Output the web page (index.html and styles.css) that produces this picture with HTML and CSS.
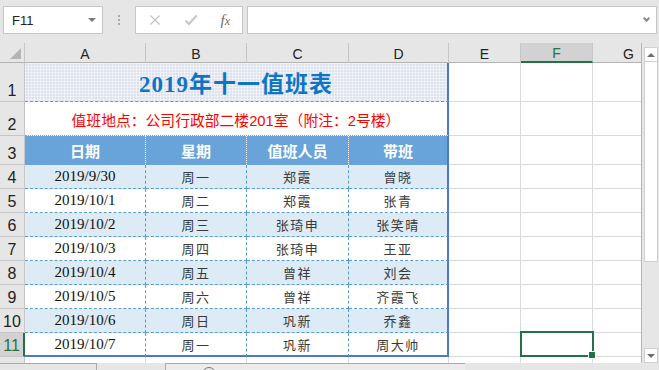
FILE: index.html
```html
<!DOCTYPE HTML>
<html>
<head>
  <title>2019年十一值班表</title>
  <link rel="stylesheet" href="styles.css">
</head>
<body>
  <!-- barra formule -->
  <div class="formula-bar">
    <div class="name-box"><span>F11</span><span class="caret"></span></div>
    <div class="grip"><span></span><span></span><span></span></div>
    <div class="fx-box">
      <svg class="icon" width="12" height="12" viewBox="0 0 12 12"><path d="M1.5 1.5 L10.5 10.5 M10.5 1.5 L1.5 10.5" stroke="#c4c4c4" stroke-width="1.3" fill="none"/></svg>
      <svg class="icon" width="14" height="12" viewBox="0 0 14 12"><path d="M1.5 6.5 L5 10 L12.5 1.5" stroke="#c4c4c4" stroke-width="2" fill="none"/></svg>
      <span class="fx">f<span class="fx-sub">x</span></span>
    </div>
    <div class="formula-input"><span class="chev"></span></div>
  </div>

  <div class="main">
    <div class="sheet">
      <div class="grid">
        <!-- intestazione colonne -->
        <div class="corner"><span class="tri"></span></div>
        <div class="ch">A</div>
        <div class="ch">B</div>
        <div class="ch">C</div>
        <div class="ch">D</div>
        <div class="ch">E</div>
        <div class="ch sel">F</div>
        <div class="ch">G</div>
        <div class="ch">H</div>

        <div class="rh">1</div>
        <div class="title">2019年十一值班表</div>
        <div class="c"></div><div class="c"></div><div class="c"></div><div class="c"></div>

        <div class="rh">2</div>
        <div class="note">值班地点：公司行政部二楼201室（附注：2号楼）</div>
        <div class="c"></div><div class="c"></div><div class="c"></div><div class="c"></div>

        <div class="rh">3</div>
        <div class="th">日期</div>
        <div class="th">星期</div>
        <div class="th">值班人员</div>
        <div class="th end">带班</div>
        <div class="c"></div><div class="c"></div><div class="c"></div><div class="c"></div>

        <div class="row alt">
          <div class="rh">4</div>
          <div class="td date">2019/9/30</div><div class="td">周一</div><div class="td">郑霞</div><div class="td end">曾晓</div>
          <div class="c"></div><div class="c"></div><div class="c"></div><div class="c"></div>
        </div>
        <div class="row">
          <div class="rh">5</div>
          <div class="td date">2019/10/1</div><div class="td">周二</div><div class="td">郑霞</div><div class="td end">张青</div>
          <div class="c"></div><div class="c"></div><div class="c"></div><div class="c"></div>
        </div>
        <div class="row alt">
          <div class="rh">6</div>
          <div class="td date">2019/10/2</div><div class="td">周三</div><div class="td">张琦申</div><div class="td end">张笑晴</div>
          <div class="c"></div><div class="c"></div><div class="c"></div><div class="c"></div>
        </div>
        <div class="row">
          <div class="rh">7</div>
          <div class="td date">2019/10/3</div><div class="td">周四</div><div class="td">张琦申</div><div class="td end">王亚</div>
          <div class="c"></div><div class="c"></div><div class="c"></div><div class="c"></div>
        </div>
        <div class="row alt">
          <div class="rh">8</div>
          <div class="td date">2019/10/4</div><div class="td">周五</div><div class="td">曾祥</div><div class="td end">刘会</div>
          <div class="c"></div><div class="c"></div><div class="c"></div><div class="c"></div>
        </div>
        <div class="row">
          <div class="rh">9</div>
          <div class="td date">2019/10/5</div><div class="td">周六</div><div class="td">曾祥</div><div class="td end">齐霞飞</div>
          <div class="c"></div><div class="c"></div><div class="c"></div><div class="c"></div>
        </div>
        <div class="row alt">
          <div class="rh">10</div>
          <div class="td date">2019/10/6</div><div class="td">周日</div><div class="td">巩新</div><div class="td end">乔鑫</div>
          <div class="c"></div><div class="c"></div><div class="c"></div><div class="c"></div>
        </div>
        <div class="row last">
          <div class="rh sel">11</div>
          <div class="td date">2019/10/7</div><div class="td">周一</div><div class="td">巩新</div><div class="td end">周大帅</div>
          <div class="c"></div><div class="c active"></div><div class="c"></div><div class="c"></div>
        </div>
        <div class="row">
          <div class="rh">12</div>
          <div class="c"></div><div class="c"></div><div class="c"></div><div class="c"></div>
          <div class="c"></div><div class="c"></div><div class="c"></div><div class="c"></div>
        </div>
      </div>
    </div>
    <!-- barra di scorrimento -->
    <div class="vscroll">
      <div class="sb-btn"><span class="up"></span></div>
      <div class="thumb"></div>
      <div class="track"></div>
      <div class="sb-btn"><span class="down"></span></div>
    </div>
  </div>

  <div class="tabs">
    <div class="tab-nav"></div>
    <div class="tab-bar"><span class="add"></span></div>
  </div>
</body>
</html>
```

FILE: styles.css
```css
* {
  box-sizing: border-box;
}

body {
  margin: 0;
  width: 659px;
  height: 370px;
  overflow: hidden;
  background-color: #e6e6e6;
  font-family: "Liberation Sans", "Noto Sans CJK SC", sans-serif;
  color: #222;
}

/* Barra formule */
.formula-bar {
  height: 43px;
  display: flex;
  padding: 6px 2px 0 3px;
}

.name-box {
  width: 100px;
  height: 28px;
  background-color: #fff;
  border: 1px solid #c6c6c6;
  display: flex;
  align-items: center;
  justify-content: space-between;
  padding: 0 6px 0 8px;
  font-size: 13px;
}

.caret {
  border-left: 4px solid transparent;
  border-right: 4px solid transparent;
  border-top: 4px solid #7a7a7a;
}

.grip {
  width: 32px;
  height: 28px;
  display: flex;
  flex-direction: column;
  align-items: center;
  justify-content: center;
  gap: 2px;
}

.grip span {
  width: 2px;
  height: 2px;
  background-color: #a8a8a8;
}

.fx-box {
  width: 108px;
  height: 28px;
  background-color: #fff;
  border: 1px solid #c6c6c6;
  display: flex;
  align-items: center;
  justify-content: space-between;
  padding: 0 12px 0 13px;
  margin-right: 4px;
}

.fx {
  font-family: "Liberation Serif", serif;
  font-style: italic;
  font-size: 15px;
  color: #6b6b6b;
}

.fx-sub {
  font-size: 12px;
}

.formula-input {
  flex: 1;
  height: 28px;
  background-color: #fff;
  border: 1px solid #c6c6c6;
  display: flex;
  align-items: center;
  justify-content: flex-end;
  padding-right: 7px;
}

.chev {
  width: 5px;
  height: 5px;
  border-right: 2px solid #8a8a8a;
  border-bottom: 2px solid #8a8a8a;
  transform: rotate(45deg);
  margin-top: -3px;
}

/* Foglio */
.main {
  display: flex;
  height: 320px;
}

.sheet {
  width: 642px;
  border-right: 1px solid #b4b4b4;
  overflow: hidden;
  background-color: #fff;
}

.grid {
  display: grid;
  grid-template-columns: 25px 121px 101px 102px 100px 72px 72px 72px 72px;
  grid-template-rows: 20px 39px 34px 29px repeat(9, 24px);
  width: 737px;
}

.row {
  display: contents;
}

.corner {
  background-color: #e6e6e6;
  border-right: 1px solid #c6c6c6;
  border-bottom: 1px solid #b4b4b4;
  display: flex;
  align-items: flex-end;
  justify-content: flex-end;
  padding: 0 3px 3px 0;
}

.tri {
  border-left: 11px solid transparent;
  border-bottom: 11px solid #b4b4b4;
}

.ch {
  background-color: #e6e6e6;
  border-right: 1px solid #c6c6c6;
  border-bottom: 1px solid #b4b4b4;
  display: flex;
  align-items: center;
  justify-content: center;
  font-size: 14px;
  padding-top: 2px;
}

.ch.sel {
  background-color: #d2d2d2;
  color: #217346;
  border-bottom: 2px solid #217346;
}

.rh {
  background-color: #e6e6e6;
  border-right: 1px solid #c6c6c6;
  border-bottom: 1px solid #c6c6c6;
  display: flex;
  align-items: flex-end;
  justify-content: center;
  font-size: 16px;
  line-height: 18px;
  padding-bottom: 1px;
}

.rh.sel {
  background-color: #d2d2d2;
  color: #217346;
  border-right: 2px solid #217346;
}

.c {
  border-right: 1px solid #d9d9d9;
  border-bottom: 1px solid #d9d9d9;
}

.c.active {
  position: relative;
}

.c.active::before {
  content: "";
  position: absolute;
  left: -1px;
  top: -2px;
  right: -2px;
  bottom: -1px;
  border: 2px solid #217346;
}

.c.active::after {
  content: "";
  position: absolute;
  right: -4px;
  bottom: -3px;
  width: 6px;
  height: 6px;
  background-color: #217346;
  border: 1px solid #fff;
}

/* Tabella turni */
.title {
  grid-column: span 4;
  background-color: #dde2ec;
  background-image: linear-gradient(90deg, rgba(255, 255, 255, 0.45) 1px, transparent 1px),
    linear-gradient(rgba(255, 255, 255, 0.45) 1px, transparent 1px);
  background-size: 3px 3px;
  border-right: 2px solid #4a7bc8;
  border-bottom: 1px dashed #5b9bd5;
  display: flex;
  align-items: center;
  justify-content: center;
  color: #0f75c3;
  font-family: "Liberation Serif", "Noto Sans CJK SC", serif;
  font-weight: bold;
  font-size: 23px;
  letter-spacing: 1px;
}

.note {
  grid-column: span 4;
  border-right: 2px solid #4a7bc8;
  border-bottom: 1px dotted #68a4da;
  display: flex;
  align-items: center;
  justify-content: center;
  color: #ff0000;
  font-size: 14.8px;
  padding-top: 2px;
}

.th {
  background-color: #68a4da;
  border-right: 1px dotted #fff;
  display: flex;
  align-items: center;
  justify-content: center;
  color: #fff;
  font-weight: bold;
  font-size: 15px;
}

.td {
  border-right: 1px dashed #5b9bd5;
  border-bottom: 1px dashed #5b9bd5;
  display: flex;
  align-items: center;
  justify-content: center;
  font-size: 13px;
  letter-spacing: 1.5px;
  color: #3a3a3a;
}

.td.date {
  font-family: "Liberation Serif", serif;
  font-size: 15px;
  letter-spacing: 0;
  color: #111;
}

.alt .td {
  background-color: #ddebf7;
}

.th.end,
.td.end {
  border-right: 2px solid #4a7bc8;
}

.last .td {
  border-bottom: 2px solid #4a7bc8;
}

/* Barra di scorrimento */
.vscroll {
  width: 16px;
  display: flex;
  flex-direction: column;
  padding: 4px 0 0 2px;
}

.sb-btn {
  height: 15px;
  background-color: #fff;
  border: 1px solid #d0d0d0;
  display: flex;
  align-items: center;
  justify-content: center;
}

.up {
  border-left: 4px solid transparent;
  border-right: 4px solid transparent;
  border-bottom: 4px solid #6e6e6e;
}

.down {
  border-left: 4px solid transparent;
  border-right: 4px solid transparent;
  border-top: 4px solid #6e6e6e;
}

.thumb {
  height: 200px;
  background-color: #fff;
  border: 1px solid #d0d0d0;
  border-top: none;
}

.track {
  flex: 1;
}

/* Schede fogli */
.tabs {
  height: 7px;
  display: flex;
}

.tab-nav {
  width: 97px;
  border-top: 1px solid #ababab;
  border-right: 1px solid #ababab;
  background-color: #e6e6e6;
}

.tab-bar {
  width: 300px;
  margin-left: 68px;
  border-top: 1px solid #ababab;
  border-left: 1px solid #ababab;
  background-color: #ececec;
  padding: 3px 0 0 36px;
}

.add {
  display: block;
  width: 14px;
  height: 14px;
  border: 1px solid #777;
  border-radius: 50%;
}
```
